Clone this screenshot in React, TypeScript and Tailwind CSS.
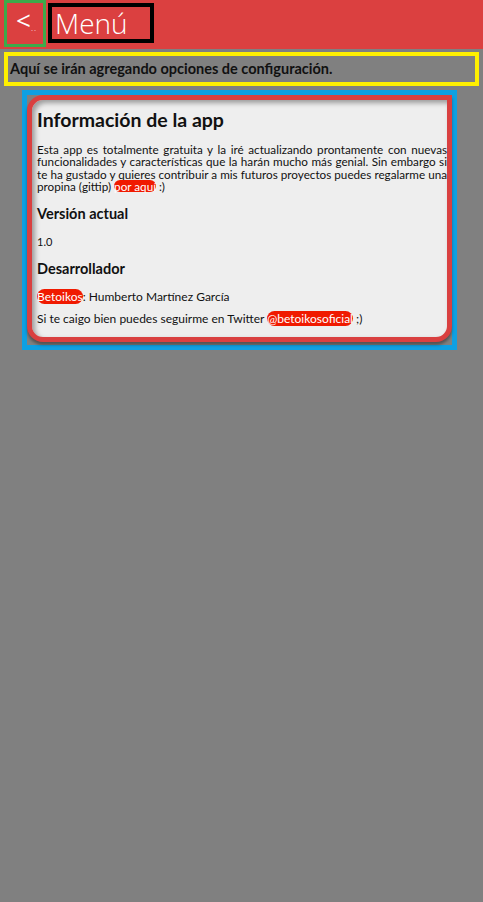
export default function App() {
  return (
    <div className="min-h-[902px] bg-[#808080] font-['Lato',sans-serif]">
      <header className="flex h-[49px] items-start bg-[#db4040]">
        <button className="ml-[4px] flex h-[47px] w-[42px] items-start border-[3px] border-[#3daa4a] pl-[9px] font-['Open_Sans',sans-serif] text-white">
          <span className="mt-[1px] text-[26px] leading-[32px]">&lt;</span>
          <span className="mt-[20px] text-[8px] leading-[10px] tracking-[1px] opacity-70">..</span>
        </button>
        <div className="ml-[2px] mt-[3px] flex h-[40px] w-[106px] items-center border-4 border-black pl-[3px]">
          <span className="font-['Open_Sans',sans-serif] text-[28px] font-light leading-none text-white">Menú</span>
        </div>
      </header>

      <div className="mx-[4px] mt-[3px] flex h-[34px] items-center border-4 border-[#fff000] pl-[2px]">
        <p className="text-[14.5px] font-bold text-[#111]">Aquí se irán agregando opciones de configuración.</p>
      </div>

      <div className="ml-[22px] mt-[4px] w-[435px] border-[5px] border-[#0ea0e2] pb-[3px]">
        <div className="rounded-[16px] rounded-tr-none border-[5px] border-[#d94040] bg-[#eeeeee] pb-[11px] pl-[5px] text-[#111] shadow-[inset_3px_3px_5px_rgba(0,0,0,0.35),0_3px_3px_rgba(0,0,0,0.35)]">
          <h2 className="pt-[8px] text-[19.5px] font-bold leading-[24px]">Información de la app</h2>
          <p className="mt-[11px] text-justify text-[11.7px] leading-[12.4px]">
            Esta app es totalmente gratuita y la iré actualizando prontamente con nuevas funcionalidades y características que la harán mucho más genial. Sin embargo si te ha gustado y quieres contribuir a mis futuros proyectos puedes regalarme una propina (gittip)
            <span className="mx-[3px] inline-block rounded-full bg-[#f01a00] leading-[12px] text-white">por aquí</span>:)
          </p>
          <h3 className="mt-[11px] text-[14.5px] font-bold leading-[20px]">Versión actual</h3>
          <p className="mt-[11px] text-[11px] leading-[14px]">1.0</p>
          <h3 className="mt-[10px] text-[14.5px] font-bold leading-[20px]">Desarrollador</h3>
          <p className="mt-[11px] text-[12px] leading-[14px]">
            <span className="rounded-full bg-[#f01a00] text-white">Betoikos</span>: Humberto Martínez García
          </p>
          <p className="mt-[8px] text-[12px] leading-[14px]">
            Si te caigo bien puedes seguirme en Twitter{' '}
            <span className="rounded-full bg-[#f01a00] text-white">@betoikosoficial</span> ;)
          </p>
        </div>
      </div>
    </div>
  )
}
